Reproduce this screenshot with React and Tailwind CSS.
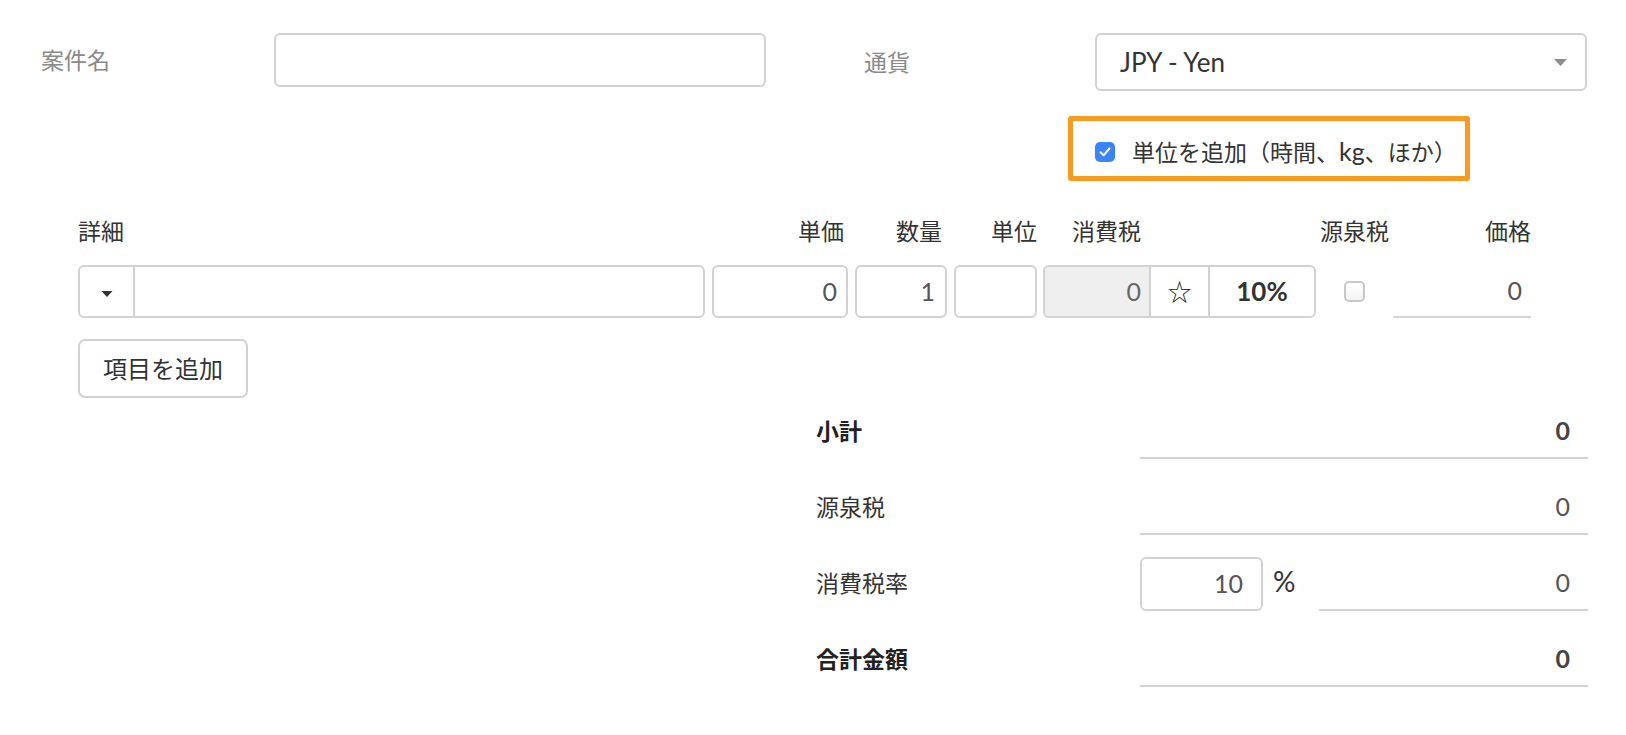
import React from "react";

const font = "font-['Lato','Noto_Sans_CJK_JP',sans-serif]";

const Caret = ({ className }) => (
  <svg width="13" height="7" viewBox="0 0 13 7" className={className}>
    <path d="M0 0 L13 0 L6.5 7 Z" fill="currentColor" />
  </svg>
);

const SummaryRow = ({ label, value, bold }) => (
  <div className="flex items-center h-[55px]">
    <div className={`w-[324px] text-[23px] ${bold ? "font-bold text-[#222]" : "text-[#333]"}`}>{label}</div>
    <div
      className={`w-[448px] h-full flex items-center justify-end pr-[18px] border-b-2 border-[#d4d4d4] text-[25px] ${
        bold ? "font-bold text-[#444]" : "text-[#555]"
      }`}
    >
      {value}
    </div>
  </div>
);

const App = () => {
  return (
    <div className={`w-[1626px] h-[735px] bg-white overflow-hidden ${font}`}>
      {/* header fields */}
      <div className="flex items-start pt-[33px]">
        <div className="w-[274px] pl-[41px] h-[54px] flex items-center text-[23px] text-[#8a8a8a]">案件名</div>
        <div className="w-[492px] h-[54px] border-2 border-[#d2d2d2] rounded-[6px]" />
        <div className="w-[98px]" />
        <div className="w-[231px] h-[58px] flex items-center text-[23px] text-[#8a8a8a]">通貨</div>
        <div className="flex flex-col">
          <div className="w-[492px] h-[58px] border-2 border-[#d2d2d2] rounded-[6px] flex items-center justify-between pl-[23px] pr-[18px]">
            <span className="text-[26px] text-[#333]">JPY - Yen</span>
            <Caret className="text-[#8c8c8c]" />
          </div>
          <div className="-ml-[27px] mt-[25px] w-[402px] h-[65px] border-[5px] border-[#f99a21] rounded-[3px] flex items-center pl-[22px] pt-[6px]">
            <div className="w-[20px] h-[20px] rounded-[5px] bg-[#3a84f7] flex items-center justify-center">
              <svg width="12" height="10" viewBox="0 0 12 10">
                <path d="M1.5 5.2 L4.6 8.3 L10.5 1.5" stroke="white" strokeWidth="2" fill="none" strokeLinecap="round" strokeLinejoin="round" />
              </svg>
            </div>
            <span className="ml-[17px] text-[23px] text-[#333]">
              単位を追加（時間、<span className="text-[25px]">kg</span>、ほか）
            </span>
          </div>
        </div>
      </div>

      {/* line items */}
      <div className="pl-[78px] mt-[35px]">
        <div className="flex items-center h-[30px] text-[23px] text-[#333]">
          <div className="w-[634px]">詳細</div>
          <div className="w-[136px] text-right pr-[4px]">単価</div>
          <div className="w-[92px] ml-[7px] text-right pr-[5px]">数量</div>
          <div className="w-[83px] ml-[7px] text-right">単位</div>
          <div className="w-[273px] ml-[6px] pl-[29px]">消費税</div>
          <div className="w-[77px] text-center">源泉税</div>
          <div className="w-[138px] text-right">価格</div>
        </div>

        <div className="flex items-center mt-[19px] h-[53px] text-[25px]">
          <div className="w-[627px] h-full flex border-2 border-[#d2d2d2] rounded-[6px]">
            <div className="w-[55px] h-full flex items-center justify-center border-r-2 border-[#d2d2d2] pt-[4px]">
              <Caret className="text-[#333] w-[12px] h-[6px]" />
            </div>
          </div>
          <div className="w-[136px] h-full ml-[7px] border-2 border-[#d2d2d2] rounded-[6px] flex items-center justify-end pr-[9px] text-[#555]">0</div>
          <div className="w-[92px] h-full ml-[7px] border-2 border-[#d2d2d2] rounded-[6px] flex items-center justify-end pr-[10px] text-[#555]">1</div>
          <div className="w-[83px] h-full ml-[7px] border-2 border-[#d2d2d2] rounded-[6px]" />
          <div className="w-[273px] h-full ml-[6px] flex border-2 border-[#d2d2d2] rounded-[6px] overflow-hidden">
            <div className="w-[104px] h-full bg-[#efefef] flex items-center justify-end pr-[8px] text-[#666]">0</div>
            <div className="w-[61px] h-full border-x-2 border-[#d2d2d2] flex items-center justify-center text-[#222] text-[24px]">☆</div>
            <div className="flex-1 h-full flex items-center justify-center font-bold text-[26px] text-[#333]">10%</div>
          </div>
          <div className="w-[77px] h-full flex items-center justify-center">
            <div className="w-[21px] h-[21px] rounded-[5px] border-2 border-[#c8c8c8] bg-gradient-to-b from-white to-[#f3f3f3]" />
          </div>
          <div className="w-[138px] h-full flex items-center justify-end pr-[9px] border-b-2 border-[#d4d4d4] text-[#555]">0</div>
        </div>

        <button className="mt-[21px] w-[170px] h-[59px] border-2 border-[#d2d2d2] rounded-[7px] text-[24px] text-[#333] bg-white">
          項目を追加
        </button>
      </div>

      {/* summary */}
      <div className="pl-[816px] mt-[6px] flex flex-col gap-[21px]">
        <SummaryRow label="小計" value="0" bold />
        <SummaryRow label="源泉税" value="0" />
        <div className="flex items-center h-[55px]">
          <div className="w-[324px] text-[23px] text-[#333]">消費税率</div>
          <div className="w-[123px] h-[54px] border-2 border-[#d2d2d2] rounded-[6px] flex items-center justify-end pr-[18px] text-[25px] text-[#555]">10</div>
          <div className="w-[56px] h-full flex items-start pt-[4px] pl-[10px] text-[28px] text-[#333]">%</div>
          <div className="w-[269px] h-full flex items-center justify-end pr-[18px] border-b-2 border-[#d4d4d4] text-[25px] text-[#555]">0</div>
        </div>
        <SummaryRow label="合計金額" value="0" bold />
      </div>
    </div>
  );
};

export default App;
